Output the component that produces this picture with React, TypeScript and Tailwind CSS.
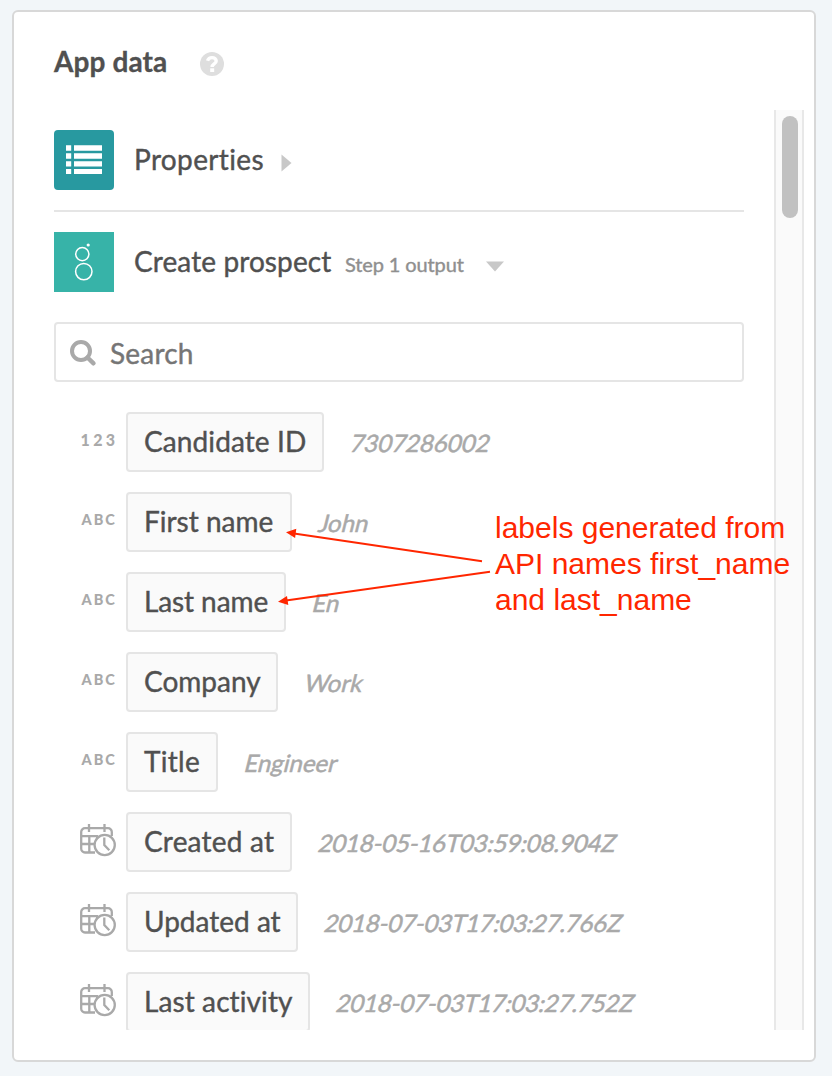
import React from "react";

type Kind = "number" | "text" | "date";

interface Field {
  kind: Kind;
  label: string;
  value: string;
  width: string;
  labelTracking?: string;
}

const fields: Field[] = [
  { kind: "number", label: "Candidate ID", value: "7307286002", width: "w-[198px]", labelTracking: "tracking-[0.1px]" },
  { kind: "text", label: "First name", value: "John", width: "w-[166px]" },
  { kind: "text", label: "Last name", value: "En", width: "w-[160px]", labelTracking: "tracking-[-0.1px]" },
  { kind: "text", label: "Company", value: "Work", width: "w-[152px]" },
  { kind: "text", label: "Title", value: "Engineer", width: "w-[92px]", labelTracking: "tracking-[0.3px]" },
  { kind: "date", label: "Created at", value: "2018-05-16T03:59:08.904Z", width: "w-[166px]", labelTracking: "tracking-[0.2px]" },
  { kind: "date", label: "Updated at", value: "2018-07-03T17:03:27.766Z", width: "w-[172px]" },
  { kind: "date", label: "Last activity", value: "2018-07-03T17:03:27.752Z", width: "w-[184px]", labelTracking: "tracking-[0.1px]" },
];

function CalendarClockIcon() {
  return (
    <svg width="36" height="34" viewBox="0 0 36 34" fill="none" stroke="#a9a9a9" strokeWidth="2.3" className="block">
      <path d="M15 28.5H5a3.8 3.8 0 0 1-3.8-4V8A3.8 3.8 0 0 1 5 4.2h23A3.8 3.8 0 0 1 31.8 8v4" />
      <path d="M9 0v8M24.5 0v8M1 12.2h17M1 20h13M9.3 12v16.5M17.2 12v3" />
      <circle cx="24.7" cy="21" r="10.1" />
      <path d="M24.3 13.5v7.5l5 5.2" />
    </svg>
  );
}

function KindMark({ kind }: { kind: Kind }) {
  if (kind === "date") {
    return (
      <div className="ml-[26px] w-[46px] shrink-0 pb-0.5">
        <CalendarClockIcon />
      </div>
    );
  }
  if (kind === "number") {
    return (
      <div className="ml-[26.5px] w-[45.5px] shrink-0 pb-1 text-[16px] leading-5 font-black tracking-[3.4px] text-[#a9a9a9]">
        123
      </div>
    );
  }
  return (
    <div className="ml-[27.5px] w-[44.5px] shrink-0 pb-1 text-[14.5px] leading-5 font-black tracking-[2px] text-[#a9a9a9]">
      ABC
    </div>
  );
}

function FieldRow({ field }: { field: Field }) {
  return (
    <div className="flex h-[60px] shrink-0 items-center">
      <KindMark kind={field.kind} />
      <div
        className={`flex h-[60px] shrink-0 items-center rounded-[4px] border-2 border-[#e5e5e5] bg-[#fafafa] pb-0.5 pl-4 text-[28px] whitespace-nowrap [-webkit-text-stroke:0.4px] ${field.width} ${field.labelTracking ?? ""}`}
      >
        {field.label}
      </div>
      <div
        className={`ml-[24.5px] origin-[0_75%] -skew-x-[14deg] pt-0.5 text-[24px] whitespace-nowrap text-[#a9a9a9] [-webkit-text-stroke:0.5px] ${field.kind === "date" ? "tracking-[-0.15px]" : ""}`}
      >
        {field.value}
      </div>
    </div>
  );
}

function Annotation() {
  return (
    <>
      <svg className="absolute top-[520px] left-[270px]" width="230" height="90" viewBox="270 520 230 90" fill="#ff2600" stroke="#ff2600">
        <path d="M482 561.3L294 533.5M490 571.7L286 600.5" strokeWidth="1.9" />
        <path d="M286 532.3l10.3-3.6-1.2 9.3zM278 601.7l9-5.8 1.3 9.2z" stroke="none" />
      </svg>
      <div className="absolute top-[510px] left-[495px] font-['Liberation_Sans',sans-serif] text-[30px] leading-9 font-normal whitespace-nowrap text-[#ff2600]">
        labels generated from
        <br />
        API names first_name
        <br />
        and last_name
      </div>
    </>
  );
}

export default function App() {
  return (
    <div className="relative flex h-[1076px] w-[832px] overflow-hidden bg-[#f2f6f9] pt-2.5 pr-4 pb-3.5 pl-3 font-['Lato',sans-serif] text-[#505050] [font-variant-ligatures:none]">
      <div className="flex flex-1 flex-col rounded-md border-2 border-[#d8d8d8] bg-white pb-[30px]">
        <div className="flex h-[98px] shrink-0 items-center pl-10">
          <h1 className="w-[146px] text-[28px] font-bold tracking-[0.1px] [-webkit-text-stroke:0.3px]">App data</h1>
          <svg width="24" height="24" viewBox="0 0 24 24" className="mt-1.5">
            <circle cx="12" cy="12" r="12" fill="#dedede" />
            <path d="M7.5 8.8C8.2 6.8 9.8 5.6 12 5.6c2.5 0 4.2 1.4 4.2 3.3 0 3-4.1 3-4.1 6" fill="none" stroke="#fff" strokeWidth="3.4" />
            <path d="M10.2 16.3h4v3.7h-4z" fill="#fff" />
          </svg>
        </div>
        <div className="flex min-h-0 flex-1 overflow-hidden">
          <div className="ml-10 flex w-[690px] shrink-0 flex-col">
            <div className="flex h-[102px] shrink-0 items-center border-b-2 border-[#e5e5e5]">
              <svg width="60" height="60" viewBox="0 0 60 60" className="shrink-0 rounded-[4px] bg-[#2899a0]">
                <path
                  d="M12 15.2h5.2v5.5H12zM20 15.2h28v5.5H20zM12 23.2h5.2v5.5H12zM20 23.2h28v5.5H20zM12 31.2h5.2v5.3H12zM20 31.2h28v5.3H20zM12 39h5.2v5H12zM20 39h28v5H20z"
                  fill="#fff"
                />
              </svg>
              <span className="ml-5 w-[147px] pb-0.5 text-[28px] tracking-[0.35px] [-webkit-text-stroke:0.4px]">Properties</span>
              <svg width="11" height="18" viewBox="0 0 11 18" className="mt-1.5">
                <path d="M0.5 0.5L10.5 9L0.5 17.5z" fill="#c8c8c8" />
              </svg>
            </div>
            <div className="flex h-[100px] shrink-0 items-center">
              <svg width="60" height="60" viewBox="0 0 60 60" className="shrink-0 bg-[#37b3a8]" fill="none" stroke="#fff" strokeWidth="1.5">
                <circle cx="28.3" cy="22.1" r="6.6" />
                <circle cx="29.8" cy="39.6" r="8.2" />
                <circle cx="34.2" cy="13" r="1.6" fill="#fff" stroke="none" />
              </svg>
              <span className="ml-5 w-[211px] pb-0.5 text-[28px] tracking-[0.1px] [-webkit-text-stroke:0.4px]">Create prospect</span>
              <span className="w-[141px] pt-1 text-[20px] tracking-[-0.12px] text-[#8f8f8f] [-webkit-text-stroke:0.4px]">Step 1 output</span>
              <svg width="18" height="11" viewBox="0 0 18 11" className="mt-2">
                <path d="M0 0.5H18L9 10.5z" fill="#c8c8c8" />
              </svg>
            </div>
            <div className="mt-2.5 flex h-[60px] shrink-0 items-center rounded-[4px] border-2 border-[#e5e5e5] pl-3.5 text-[#757575]">
              <svg width="28" height="28" viewBox="0 0 28 28" fill="none" stroke="#a9a9a9" strokeWidth="4" className="mt-0.5">
                <circle cx="11" cy="12" r="9" />
                <path d="M17.5 18.5l6 5.8" strokeWidth="4.4" strokeLinecap="round" />
              </svg>
              <span className="ml-3 pt-0.5 text-[28px] tracking-[0.2px] [-webkit-text-stroke:0.4px]">Search</span>
            </div>
            <div className="mt-[30px] flex flex-col gap-5">
              {fields.map((field) => (
                <FieldRow key={field.label} field={field} />
              ))}
            </div>
          </div>
          <div className="ml-[30px] w-[30px] shrink-0 border-x-2 border-[#e8e8e8] bg-[#fafafa] pt-1.5 pl-1.5">
            <div className="h-[102px] w-4 rounded-full bg-[#c1c1c1]" />
          </div>
        </div>
      </div>
      <Annotation />
    </div>
  );
}
